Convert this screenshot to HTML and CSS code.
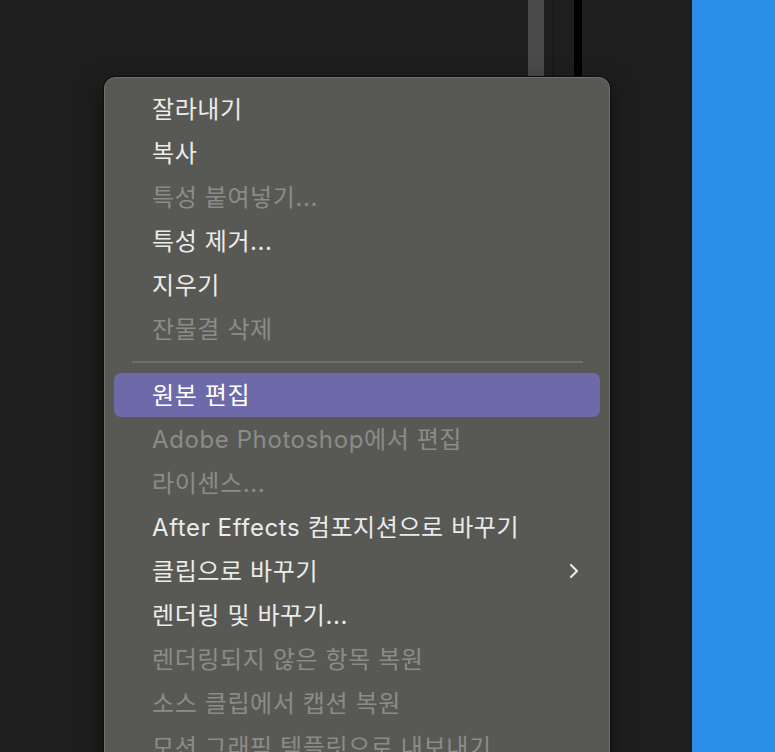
FILE: index.html
```html
<!DOCTYPE html>
<html lang="ko">

<head>
  <meta charset="UTF-8" />
  <meta name="viewport" content="width=device-width, initial-scale=1.0" />
  <title>Context Menu</title>
  <link rel="stylesheet" href="styles.css">
</head>

<body>
  <div class="workspace">
    <div class="timeline">
      <div class="track-bar gray"></div>
      <div class="track-bar thin"></div>
      <div class="track-bar black"></div>
    </div>
    <div class="side-panel"></div>
  </div>

  <div class="menu">
    <div class="item">잘라내기</div>
    <div class="item">복사</div>
    <div class="item disabled">특성 붙여넣기...</div>
    <div class="item">특성 제거...</div>
    <div class="item">지우기</div>
    <div class="item disabled">잔물결 삭제</div>
    <div class="separator"></div>
    <div class="item active">원본 편집</div>
    <div class="item disabled">Adobe Photoshop에서 편집</div>
    <div class="item disabled">라이센스...</div>
    <div class="item">After Effects 컴포지션으로 바꾸기</div>
    <div class="item submenu">
      <span>클립으로 바꾸기</span>
      <svg class="chevron" width="12" height="16" viewBox="0 0 12 16">
        <path d="M3 2 L9 8 L3 14" fill="none" stroke="#e6e6e4" stroke-width="2.2" stroke-linecap="round" stroke-linejoin="round" />
      </svg>
    </div>
    <div class="item">렌더링 및 바꾸기...</div>
    <div class="item disabled">렌더링되지 않은 항목 복원</div>
    <div class="item disabled">소스 클립에서 캡션 복원</div>
    <div class="item disabled">모션 그래픽 템플릿으로 내보내기</div>
  </div>
</body>

</html>
```

FILE: styles.css
```css
html,
body {
  margin: 0;
  height: 100%;
  overflow: hidden;
}

body {
  background-color: #1e1e1e;
  font-family: "Inter", "Noto Sans CJK KR", sans-serif;
  position: relative;
}

.workspace {
  display: flex;
  height: 100%;
}

.timeline {
  flex: 1;
  display: flex;
  align-items: stretch;
}

.track-bar {
  height: 100%;
}

.track-bar.gray {
  width: 16px;
  margin-left: 528px;
  background-color: #4a4a4a;
}

.track-bar.thin {
  width: 2px;
  margin-left: 8px;
  background-color: #191919;
}

.track-bar.black {
  width: 8px;
  margin-left: 20px;
  background-color: #000;
}

.side-panel {
  width: 83px;
  background-color: #2b8fea;
}

.menu {
  position: absolute;
  left: 104px;
  top: 77px;
  width: 506px;
  height: 720px;
  box-sizing: border-box;
  background-color: #585955;
  border: 1px solid #70716d;
  border-radius: 11px;
  box-shadow: 0 0 0 1px #0e0e0e, 0 8px 24px rgba(0, 0, 0, 0.5);
  padding: 9px 9px 0 9px;
}

.item {
  height: 44px;
  box-sizing: border-box;
  display: flex;
  align-items: center;
  justify-content: space-between;
  padding: 0 20px 4px 38px;
  border-radius: 7px;
  font-size: 24px;
  letter-spacing: 0.6px;
  color: #ebebea;
  white-space: nowrap;
}

.item.disabled {
  color: #8b8c88;
}

.item.active {
  background-color: #6e69a9;
  color: #fff;
}

.separator {
  height: 2px;
  background-color: #6e6f6b;
  margin: 10px 17px 10px 18px;
}

.chevron {
  display: block;
  margin-top: 4px;
}
```
